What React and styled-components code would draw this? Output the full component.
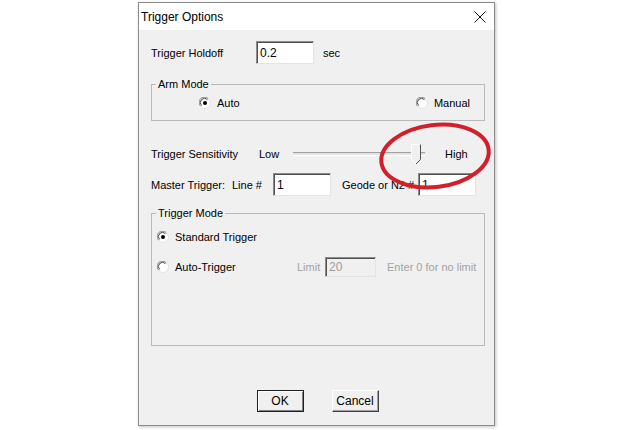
import React from "react";
import styled, { createGlobalStyle } from "styled-components";

const GlobalStyle = createGlobalStyle`
  html, body {
    margin: 0;
    background: #ffffff;
  }
  body {
    font-family: "Liberation Sans", Arial, sans-serif;
    font-size: 11px;
    color: #000;
  }
`;

const Page = styled.div`
  width: 640px;
  height: 430px;
  padding: 2px 0 0 138px;
  box-sizing: border-box;
`;

const Dialog = styled.div`
  position: relative;
  width: 357px;
  height: 424px;
  box-sizing: border-box;
  border: 1px solid #8c8c8c;
  background: #f0f0f0;
  box-shadow: 1px 1px 3px rgba(0, 0, 0, 0.25);
  display: flex;
  flex-direction: column;
`;

const TitleBar = styled.div`
  height: 27px;
  background: #fff;
  display: flex;
  align-items: center;
  justify-content: space-between;
  padding: 0 8px 0 2px;
  font-size: 12px;
`;

const Content = styled.div`
  padding: 0 10px 0 12px;
  display: flex;
  flex-direction: column;
`;

const Row = styled.div`
  display: flex;
  align-items: center;
  height: ${(p) => p.h || 23}px;
  margin-top: ${(p) => p.top || 0}px;
`;

const Label = styled.span`
  width: ${(p) => (p.w ? `${p.w}px` : "auto")};
  flex-shrink: 0;
  margin-left: ${(p) => p.ml || 0}px;
  color: ${(p) => (p.disabled ? "#a3a3a3" : "#000")};
  white-space: nowrap;
`;

const Field = styled.div`
  width: ${(p) => p.w || 58}px;
  height: ${(p) => p.h || 23}px;
  box-sizing: border-box;
  margin-left: ${(p) => p.ml || 0}px;
  flex-shrink: 0;
  background: ${(p) => (p.disabled ? "#f0f0f0" : "#fff")};
  color: ${(p) => (p.disabled ? "#9a9a9a" : "#000")};
  font-size: 12px;
  border: 1px solid;
  border-color: #8a8a8a #e4e4e4 #e4e4e4 #8a8a8a;
  box-shadow: inset 1px 1px 0 #505050;
  padding: 0 0 0 3px;
  display: flex;
  align-items: center;
`;

const Group = styled.fieldset`
  margin: ${(p) => p.top || 0}px 0 0 0;
  padding: 0;
  border: 1px solid #b9b9b9;
  min-width: 0;
  width: 334px;
  box-sizing: border-box;
  height: ${(p) => p.h}px;
`;

const Legend = styled.legend`
  margin-left: 4px;
  padding: 0 2px;
  line-height: 14px;
  font-size: 11px;
`;

const RadioRow = styled.div`
  display: flex;
  align-items: center;
  height: 16px;
  margin-top: ${(p) => p.top || 0}px;
  padding: ${(p) => p.pad || "0"};
  justify-content: ${(p) => p.justify || "flex-start"};
`;

const RadioItem = styled.label`
  display: flex;
  align-items: center;
  gap: 6px;
  white-space: nowrap;
  flex-shrink: 0;
  width: ${(p) => (p.w ? `${p.w}px` : "auto")};
`;

const Radio = ({ checked }) => (
  <svg width="12" height="12" viewBox="0 0 12 12">
    <circle cx="6" cy="6" r="5.5" fill="#fff" stroke="#e3e3e3" />
    <path d="M1.6 9.2 A5 5 0 0 1 9.2 1.6" fill="none" stroke="#8a8a8a" />
    <path d="M2.6 8.4 A4 4 0 0 1 8.4 2.6" fill="none" stroke="#404040" />
    {checked && <circle cx="6" cy="6" r="2" fill="#000" />}
  </svg>
);

const Track = styled.div`
  position: relative;
  width: 132px;
  margin-left: ${(p) => p.ml || 0}px;
  height: 20px;
  display: flex;
  align-items: center;
  flex-shrink: 0;
`;

const TrackLine = styled.div`
  flex: 1;
  height: 2px;
  border-top: 1px solid #a0a0a0;
  border-bottom: 1px solid #fff;
  background: #e3e3e3;
`;

const Thumb = styled.svg`
  position: absolute;
  right: 3px;
  top: 0;
`;

const Buttons = styled.div`
  display: flex;
  justify-content: center;
  gap: 28px;
  margin-top: 44px;
`;

const Button = styled.button`
  width: 47px;
  height: 22px;
  font-family: "Liberation Sans", Arial, sans-serif;
  font-size: 12px;
  color: #000;
  background: #f0f0f0;
  padding: 0;
  border: 1px solid;
  border-color: ${(p) => (p.primary ? "#202020" : "#fff #404040 #404040 #fff")};
  box-shadow: ${(p) =>
    p.primary
      ? "inset 1px 1px 0 #fff, inset -1px -1px 0 #808080"
      : "inset -1px -1px 0 #a0a0a0"};
`;

const Highlight = styled.svg`
  position: absolute;
  left: 235px;
  top: 115px;
  pointer-events: none;
`;

const CloseIcon = () => (
  <svg width="12" height="12" viewBox="0 0 12 12">
    <path d="M0.5 0.5 L11.5 11.5 M11.5 0.5 L0.5 11.5" stroke="#111" strokeWidth="1" />
  </svg>
);

export default function App() {
  return (
    <Page>
      <GlobalStyle />
      <Dialog>
        <TitleBar>
          <span>Trigger Options</span>
          <CloseIcon />
        </TitleBar>
        <Content>
          <Row top={11}>
            <Label w={105}>Trigger Holdoff</Label>
            <Field w={58}>0.2</Field>
            <Label ml={9}>sec</Label>
          </Row>

          <Group top={13} h={44}>
            <Legend>Arm Mode</Legend>
            <RadioRow top={4} pad="0 14px 0 47px" justify="space-between">
              <RadioItem>
                <Radio checked />
                Auto
              </RadioItem>
              <RadioItem>
                <Radio />
                Manual
              </RadioItem>
            </RadioRow>
          </Group>

          <Row top={23} h={20}>
            <Label w={108}>Trigger Sensitivity</Label>
            <Label w={34}>Low</Label>
            <Track>
              <TrackLine />
              <Thumb width="11" height="21" viewBox="0 0 11 21">
                <path d="M0.5 0.5 H9.5 V15.5 L5 20 L0.5 15.5 Z" fill="#f0f0f0" stroke="#fff" />
                <path d="M9.5 0.5 V15.5 L5 20" fill="none" stroke="#505050" />
              </Thumb>
            </Track>
            <Label ml={20}>High</Label>
          </Row>

          <Row top={9}>
            <Label w={81}>Master Trigger:</Label>
            <Label w={41}>Line #</Label>
            <Field w={58}>1</Field>
            <Label ml={11} w={76}>Geode or N2 #</Label>
            <Field w={58}>1</Field>
          </Row>

          <Group top={10} h={140}>
            <Legend>Trigger Mode</Legend>
            <RadioRow top={9} pad="0 0 0 5px">
              <RadioItem>
                <Radio checked />
                Standard Trigger
              </RadioItem>
            </RadioRow>
            <RadioRow top={14} pad="0 0 0 5px">
              <RadioItem w={140}>
                <Radio />
                Auto-Trigger
              </RadioItem>
              <Label w={28} disabled>
                Limit
              </Label>
              <Field w={51} h={20} disabled>
                20
              </Field>
              <Label ml={11} disabled>
                Enter 0 for no limit
              </Label>
            </RadioRow>
          </Group>

          <Buttons>
            <Button primary>OK</Button>
            <Button>Cancel</Button>
          </Buttons>
        </Content>

        <Highlight width="122" height="76" viewBox="0 0 122 76">
          <ellipse
            cx="61"
            cy="38"
            rx="54"
            ry="31"
            transform="rotate(-7 61 38)"
            fill="none"
            stroke="#d2202a"
            strokeWidth="4"
          />
        </Highlight>
      </Dialog>
    </Page>
  );
}
